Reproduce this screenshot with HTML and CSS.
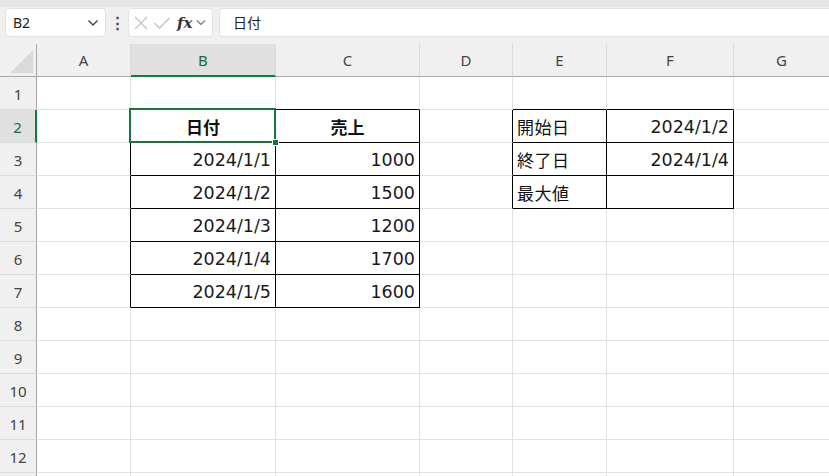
FILE: index.html
```html
<!DOCTYPE html>
<html lang="ja">
<head>
  <meta charset="UTF-8">
  <title>Sheet1</title>
  <link rel="stylesheet" href="styles.css">
</head>
<body>

  <!-- Formula bar -->
  <div class="toolbar">
    <div class="name-box">
      <span>B2</span>
      <svg class="chev" width="12" height="8" viewBox="0 0 12 8"><path d="M1.5 1.5 L6 6 L10.5 1.5" fill="none" stroke="#444" stroke-width="1.4"/></svg>
    </div>
    <div class="more">&#8942;</div>
    <div class="fx-box">
      <svg width="16" height="16" viewBox="0 0 16 16"><path d="M2 2 L14 14 M14 2 L2 14" stroke="#c4c4c4" stroke-width="1.3"/></svg>
      <svg width="18" height="16" viewBox="0 0 18 16"><path d="M1.5 8 L6.5 13 L16.5 3" fill="none" stroke="#c4c4c4" stroke-width="1.3"/></svg>
      <span class="fx">fx</span>
      <svg width="10" height="7" viewBox="0 0 10 7"><path d="M1 1.5 L5 5.5 L9 1.5" fill="none" stroke="#777" stroke-width="1.2"/></svg>
    </div>
    <div class="formula">日付</div>
  </div>

  <!-- Grid -->
  <div class="sheet">
    <div class="corner"><span class="tri"></span></div>
    <div class="col-h">A</div>
    <div class="col-h sel">B</div>
    <div class="col-h">C</div>
    <div class="col-h">D</div>
    <div class="col-h">E</div>
    <div class="col-h">F</div>
    <div class="col-h">G</div>

    <!-- row 1 -->
    <div class="row-h">1</div>
    <div class="c"></div><div class="c bb"></div><div class="c bb"></div><div class="c"></div><div class="c bb"></div><div class="c bb"></div><div class="c"></div>

    <!-- row 2 -->
    <div class="row-h sel">2</div>
    <div class="c br"></div>
    <div class="c t head active">日付<span class="cursor"><i></i></span></div>
    <div class="c t head">売上</div>
    <div class="c br"></div>
    <div class="c t lbl">開始日</div>
    <div class="c t num">2024/1/2</div>
    <div class="c"></div>

    <!-- row 3 -->
    <div class="row-h">3</div>
    <div class="c br"></div>
    <div class="c t num">2024/1/1</div>
    <div class="c t num">1000</div>
    <div class="c br"></div>
    <div class="c t lbl">終了日</div>
    <div class="c t num">2024/1/4</div>
    <div class="c"></div>

    <!-- row 4 -->
    <div class="row-h">4</div>
    <div class="c br"></div>
    <div class="c t num">2024/1/2</div>
    <div class="c t num">1500</div>
    <div class="c br"></div>
    <div class="c t lbl">最大値</div>
    <div class="c t"></div>
    <div class="c"></div>

    <!-- row 5 -->
    <div class="row-h">5</div>
    <div class="c br"></div>
    <div class="c t num">2024/1/3</div>
    <div class="c t num">1200</div>
    <div class="c"></div><div class="c"></div><div class="c"></div><div class="c"></div>

    <!-- row 6 -->
    <div class="row-h">6</div>
    <div class="c br"></div>
    <div class="c t num">2024/1/4</div>
    <div class="c t num">1700</div>
    <div class="c"></div><div class="c"></div><div class="c"></div><div class="c"></div>

    <!-- row 7 -->
    <div class="row-h">7</div>
    <div class="c br"></div>
    <div class="c t num">2024/1/5</div>
    <div class="c t num">1600</div>
    <div class="c"></div><div class="c"></div><div class="c"></div><div class="c"></div>

    <div class="row-h">8</div>
    <div class="c"></div><div class="c"></div><div class="c"></div><div class="c"></div><div class="c"></div><div class="c"></div><div class="c"></div>
    <div class="row-h">9</div>
    <div class="c"></div><div class="c"></div><div class="c"></div><div class="c"></div><div class="c"></div><div class="c"></div><div class="c"></div>
    <div class="row-h">10</div>
    <div class="c"></div><div class="c"></div><div class="c"></div><div class="c"></div><div class="c"></div><div class="c"></div><div class="c"></div>
    <div class="row-h">11</div>
    <div class="c"></div><div class="c"></div><div class="c"></div><div class="c"></div><div class="c"></div><div class="c"></div><div class="c"></div>
    <div class="row-h">12</div>
    <div class="c"></div><div class="c"></div><div class="c"></div><div class="c"></div><div class="c"></div><div class="c"></div><div class="c"></div>
    <!-- row 13 only peeks in at the bottom edge -->
    <div class="row-h"></div>
    <div class="c"></div><div class="c"></div><div class="c"></div><div class="c"></div><div class="c"></div><div class="c"></div><div class="c"></div>
  </div>

</body>
</html>
```

FILE: styles.css
```css
/* Reset */
* { margin: 0; padding: 0; box-sizing: border-box; }
html, body {
  width: 829px;
  height: 476px;
  overflow: hidden;
  background: #fff;
  font-family: "Noto Sans", "Noto Sans CJK JP", sans-serif;
  color: #222;
}

/* Formula bar */
.toolbar {
  height: 44px;
  background: #f0f0f0;
  border-top: 7px solid #e6e6e6;
  display: flex;
  align-items: flex-start;
  padding-top: 1px;
  padding-left: 5px;
}
.name-box {
  width: 101px;
  height: 29px;
  background: #fff;
  border-radius: 4px;
  border: 1px solid #e2e2e2;
  display: flex;
  align-items: center;
  justify-content: space-between;
  padding: 0 6px 0 7px;
  font-size: 14px;
  color: #222;
}
.name-box .chev { margin-top: 1px; }
.more {
  width: 22px;
  text-align: center;
  font-size: 15px;
  line-height: 29px;
  font-weight: bold;
  color: #444;
}
.fx-box {
  width: 85px;
  height: 29px;
  background: #fff;
  border-radius: 4px;
  border: 1px solid #e2e2e2;
  display: flex;
  align-items: center;
  gap: 4px;
  padding-left: 4px;
}
.fx-box .fx {
  font-family: "DejaVu Serif", "Liberation Serif", serif;
  font-style: italic;
  font-weight: bold;
  font-size: 15px;
  color: #333;
  margin-left: 2px;
}
.formula {
  flex: 1;
  height: 29px;
  margin-left: 6px;
  background: #fff;
  border-radius: 4px 0 0 4px;
  border: 1px solid #e2e2e2;
  border-right: none;
  font-family: "Noto Sans CJK JP", sans-serif;
  font-size: 14px;
  line-height: 27px;
  padding-left: 13px;
  color: #222;
}

/* Sheet grid */
.sheet {
  display: grid;
  grid-template-columns: 37px 94px 145px 144px 93px 94px 127px 96px;
  grid-template-rows: 33px repeat(13, 33px);
  height: 432px;
  overflow: hidden;
}
.corner {
  background: #f0f0f0;
  border-right: 1px solid #a8a8a8;
  border-bottom: 1px solid #a8a8a8;
  position: relative;
}
.corner .tri {
  position: absolute;
  right: 3px;
  bottom: 3px;
  width: 0;
  height: 0;
  border-left: 23px solid transparent;
  border-bottom: 23px solid #dadada;
}
.col-h {
  background: #f0f0f0;
  border-right: 1px solid #dadada;
  border-bottom: 1px solid #a8a8a8;
  display: flex;
  align-items: center;
  justify-content: center;
  font-size: 15px;
  color: #444;
}
.col-h.sel {
  background: #e0e0e0;
  border-bottom: 2px solid #107c41;
  color: #1a6b3e;
}
.row-h {
  background: #f0f0f0;
  border-right: 1px solid #a8a8a8;
  border-bottom: 1px solid #dadada;
  display: flex;
  align-items: center;
  justify-content: center;
  font-size: 15px;
  color: #444;
  padding-top: 1px;
}
.row-h.sel {
  background: #e0e0e0;
  border-right: 2px solid #107c41;
  color: #1a6b3e;
}

/* Cells */
.c {
  border-right: 1px solid #e1e1e1;
  border-bottom: 1px solid #e1e1e1;
  font-family: "Noto Sans CJK JP", sans-serif;
  font-size: 17px;
  color: #111;
  display: flex;
  align-items: center;
  padding: 1px 4px 0;
  white-space: nowrap;
}
.c.t { border-right-color: #000; border-bottom-color: #000; }
.c.bb { border-bottom-color: #000; }
.c.br { border-right-color: #000; }
.c.lbl { letter-spacing: 0.5px; }
.c.num {
  justify-content: flex-end;
  font-family: "DejaVu Sans", sans-serif;
  font-size: 17.5px;
  color: #1a1a1a;
}
.c.head { justify-content: center; font-weight: bold; }
.c.active { position: relative; }
.c.active .cursor {
  position: absolute;
  left: -2px;
  top: -2px;
  right: -1px;
  bottom: -1px;
  border: 2px solid #1e7145;
}
.c.active .cursor i {
  position: absolute;
  right: -5px;
  bottom: -5px;
  width: 7px;
  height: 7px;
  background: #1e7145;
  border: 1px solid #fff;
}
```
